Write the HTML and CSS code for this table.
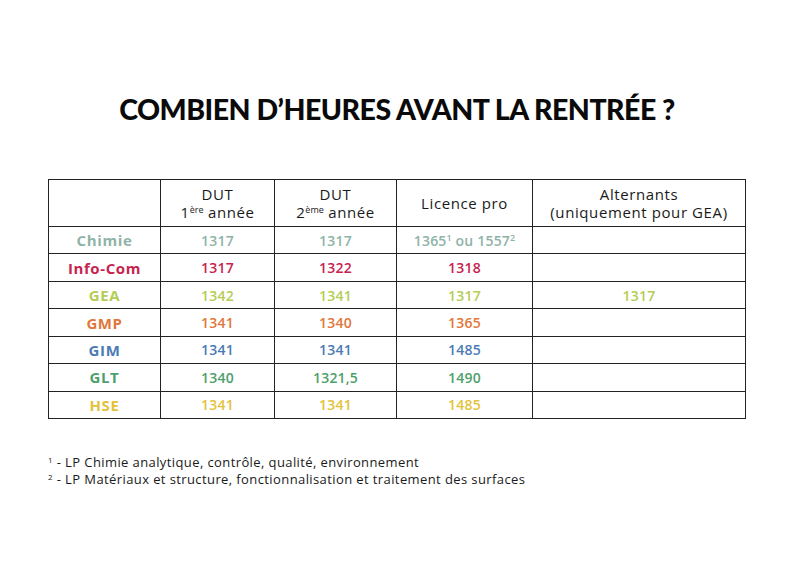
FILE: index.html
```html
<!DOCTYPE html>
<html lang="fr">
<head>
<meta charset="utf-8">
<link rel="stylesheet" href="styles.css">
</head>
<body>
<div class="page">
  <h1 class="title">Combien d’heures avant la rentrée ?</h1>
  <table class="hours">
    <thead>
      <tr>
        <th class="c1"></th>
        <th class="c2">DUT<br>1<sup>ère</sup> année</th>
        <th class="c3">DUT<br>2<sup>ème</sup> année</th>
        <th class="c4">Licence pro</th>
        <th class="c5">Alternants<br>(uniquement pour GEA)</th>
      </tr>
    </thead>
    <tbody>
      <tr class="chimie"><td class="name">Chimie</td><td>1317</td><td>1317</td><td>1365<sup>1</sup> ou 1557<sup>2</sup></td><td></td></tr>
      <tr class="infocom"><td class="name">Info-Com</td><td>1317</td><td>1322</td><td>1318</td><td></td></tr>
      <tr class="gea"><td class="name">GEA</td><td>1342</td><td>1341</td><td>1317</td><td>1317</td></tr>
      <tr class="gmp"><td class="name">GMP</td><td>1341</td><td>1340</td><td>1365</td><td></td></tr>
      <tr class="gim"><td class="name">GIM</td><td>1341</td><td>1341</td><td>1485</td><td></td></tr>
      <tr class="glt"><td class="name">GLT</td><td>1340</td><td>1321,5</td><td>1490</td><td></td></tr>
      <tr class="hse"><td class="name">HSE</td><td>1341</td><td>1341</td><td>1485</td><td></td></tr>
    </tbody>
  </table>
  <div class="notes">
    <p><sup>1</sup> - LP Chimie analytique, contrôle, qualité, environnement</p>
    <p><sup>2</sup> - LP Matériaux et structure, fonctionnalisation et traitement des surfaces</p>
  </div>
</div>
</body>
</html>
```

FILE: styles.css
```css
html, body {
  margin: 0;
  padding: 0;
  background: #ffffff;
}
body {
  width: 794px;
  height: 567px;
  overflow: hidden;
  font-family: "Open Sans", "DejaVu Sans", sans-serif;
  color: #1a1a1a;
}
.page {
  padding: 92px 0 0 48px;
}
.title {
  margin: 0;
  width: 698px;
  text-align: center;
  text-transform: uppercase;
  font-family: "Lato", "Liberation Sans", sans-serif;
  font-weight: 900;
  font-size: 28.5px;
  line-height: 34px;
  letter-spacing: -0.5px;
  color: #0a0a0a;
}
.hours {
  margin-top: 53px;
  width: 697px;
  border-collapse: collapse;
  table-layout: fixed;
}
.c1 { width: 111px; }
.c2 { width: 113px; }
.c3 { width: 121px; }
.c4 { width: 135px; }
.c5 { width: 212px; }
.hours th, .hours td {
  border: 1px solid #222;
  text-align: center;
  padding: 0;
}
.hours th {
  height: 46px;
  font-weight: 400;
  font-size: 15px;
  line-height: 18.5px;
  letter-spacing: 0.6px;
  color: #1a1a1a;
}
.hours sup {
  font-size: 9px;
  line-height: 0;
  vertical-align: 5px;
  letter-spacing: 0;
}
.hours td {
  height: 26.45px;
  font-size: 14px;
  font-weight: 600;
  letter-spacing: 0.2px;
}
.hours td.name {
  font-weight: 700;
  font-size: 15px;
  letter-spacing: 0.6px;
}
.chimie { color: #8fb3a7; }
.infocom { color: #c8234f; }
.gea { color: #b3cd55; }
.gmp { color: #e2773a; }
.gim { color: #4b7bb5; }
.glt { color: #4e9f6c; }
.hse { color: #e3c23c; }
.notes {
  margin-top: 35px;
  font-size: 13px;
  line-height: 16.5px;
  letter-spacing: 0.4px;
  color: #1a1a1a;
}
.notes p {
  margin: 0;
}
.notes sup {
  font-size: 8px;
  line-height: 0;
  vertical-align: 4px;
}
```
